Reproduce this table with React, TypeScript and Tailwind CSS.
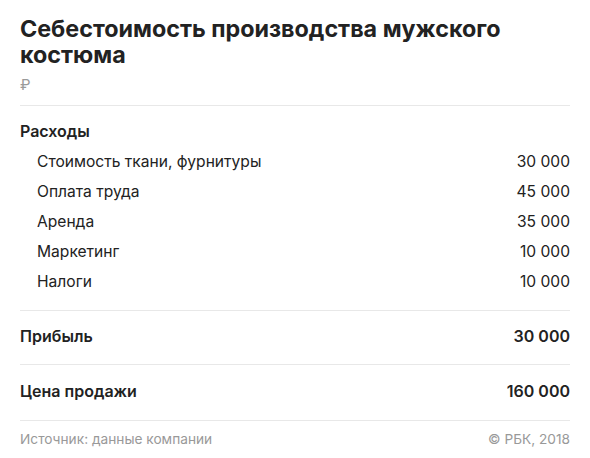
const expenses = [
  { label: "Стоимость ткани, фурнитуры", value: "30 000" },
  { label: "Оплата труда", value: "45 000" },
  { label: "Аренда", value: "35 000" },
  { label: "Маркетинг", value: "10 000" },
  { label: "Налоги", value: "10 000" },
];

function TotalRow({ label, value, tall }: { label: string; value: string; tall?: boolean }) {
  return (
    <div
      className={`flex items-center justify-between pb-[3px] border-b border-[#e8e8e8] text-[16px] font-semibold text-[#222] ${
        tall ? "h-[56px]" : "h-[54px]"
      }`}
    >
      <span>{label}</span>
      <span>{value}</span>
    </div>
  );
}

export default function App() {
  return (
    <div className="w-[590px] h-[458px] bg-white px-5 pt-[16px] font-['Inter',sans-serif] text-[#222]">
      <h1 className="text-[23.3px] leading-[26px] font-bold">
        Себестоимость производства мужского костюма
      </h1>
      <div className="mt-[7px] text-[15px] leading-[20px] text-[#9a9a9a]">₽</div>
      <div className="mt-[10px] border-t border-[#e8e8e8]" />

      <div className="pt-[13px] pb-[13px] border-b border-[#e8e8e8]">
        <div className="text-[16px] leading-[24px] font-semibold">Расходы</div>
        <div className="mt-[4px] flex flex-col">
          {expenses.map((e) => (
            <div
              key={e.label}
              className="flex items-center justify-between h-[30px] pl-[17px] text-[15.6px]"
            >
              <span>{e.label}</span>
              <span>{e.value}</span>
            </div>
          ))}
        </div>
      </div>

      <TotalRow label="Прибыль" value="30 000" />
      <TotalRow label="Цена продажи" value="160 000" tall />

      <div className="flex items-center justify-between h-[36px] text-[13.7px] text-[#999]">
        <span>Источник: данные компании</span>
        <span>© РБК, 2018</span>
      </div>
    </div>
  );
}
